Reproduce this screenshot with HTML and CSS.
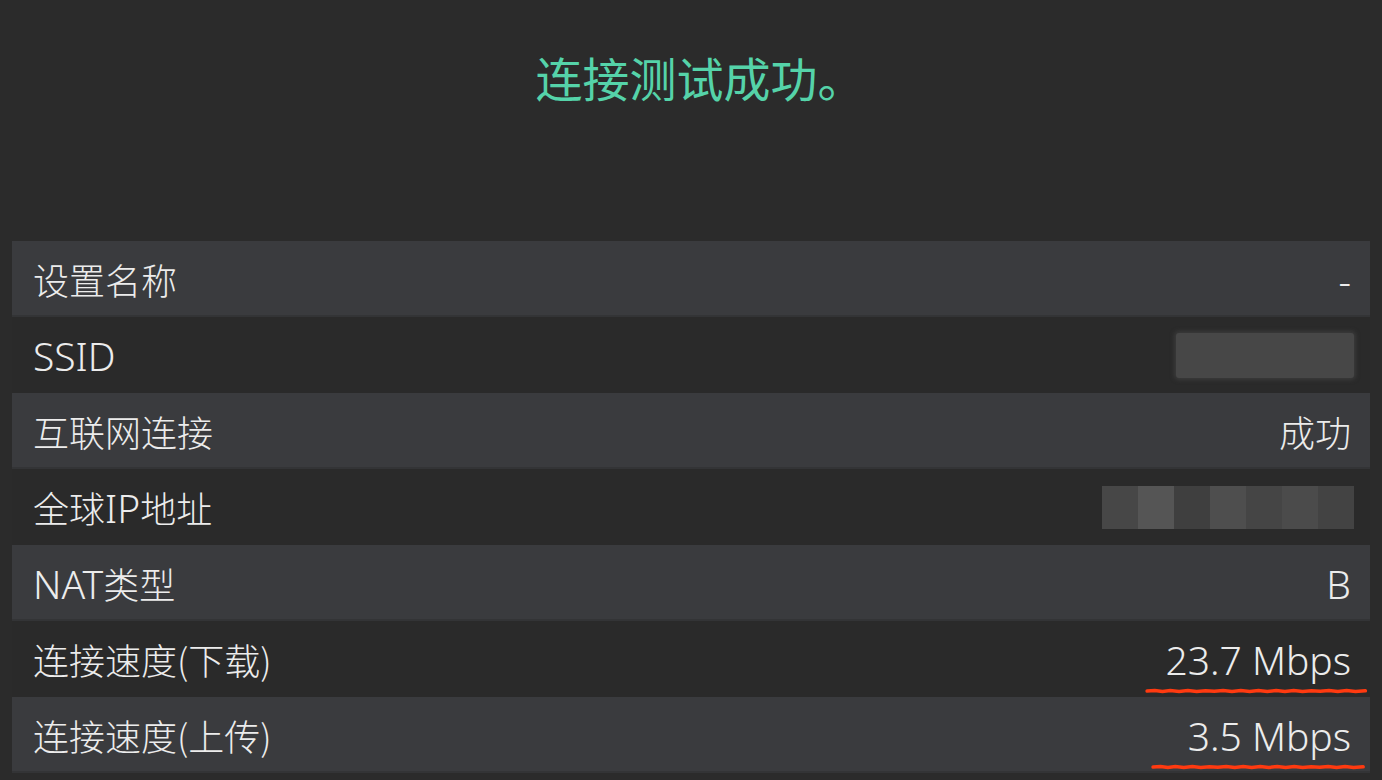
FILE: index.html
```html
<!DOCTYPE html>
<html lang="zh-CN">
<head>
<meta charset="utf-8">
<title>连接测试</title>
<link rel="stylesheet" href="styles.css">
</head>
<body>
<div class="screen">
  <header class="head">
    <h1 class="title">连接测试成功。</h1>
  </header>
  <ul class="list">
    <li class="row light"><span class="label">设置名称</span><span class="value"><span class="en">-</span></span></li>
    <li class="row"><span class="label"><span class="en">SSID</span></span><span class="value"><span class="blur-ssid"></span></span></li>
    <li class="row light"><span class="label">互联网连接</span><span class="value">成功</span></li>
    <li class="row"><span class="label">全球<span class="en">IP</span>地址</span><span class="value">
      <span class="mosaic">
        <i class="m1"></i><i class="m2"></i><i class="m3"></i><i class="m4"></i><i class="m5"></i><i class="m6"></i><i class="m7"></i>
      </span></span></li>
    <li class="row light"><span class="label"><span class="en">NAT</span>类型</span><span class="value"><span class="en">B</span></span></li>
    <li class="row"><span class="label">连接速度(下载)</span><span class="value marked m-down"><span class="en">23.7 Mbps</span>
      <svg class="redline" viewBox="0 0 200 6" preserveAspectRatio="none"><path d="M1 3 L8 2.4 L15 3.6 L22 2.6 L30 3.4 L38 2.5 L46 3.5 L54 2.7 L62 3.3 L70 2.4 L78 3.6 L86 2.6 L94 3.4 L102 2.5 L110 3.5 L118 2.6 L126 3.4 L134 2.5 L142 3.6 L150 2.7 L158 3.3 L166 2.4 L174 3.5 L182 2.6 L190 3.4 L199 2.8"/></svg></span></li>
    <li class="row light"><span class="label">连接速度(上传)</span><span class="value marked m-up"><span class="en">3.5 Mbps</span>
      <svg class="redline" viewBox="0 0 200 6" preserveAspectRatio="none"><path d="M1 3 L8 2.4 L15 3.6 L22 2.6 L30 3.4 L38 2.5 L46 3.5 L54 2.7 L62 3.3 L70 2.4 L78 3.6 L86 2.6 L94 3.4 L102 2.5 L110 3.5 L118 2.6 L126 3.4 L134 2.5 L142 3.6 L150 2.7 L158 3.3 L166 2.4 L174 3.5 L182 2.6 L190 3.4 L199 2.8"/></svg></span></li>
  </ul>
</div>
</body>
</html>
```

FILE: styles.css
```css
html, body {
  margin: 0;
  padding: 0;
  background: #2b2b2b;
}

.screen {
  width: 1382px;
  height: 780px;
  display: flex;
  flex-direction: column;
  font-family: "Noto Sans CJK SC", "Noto Sans", sans-serif;
  color: #ececec;
  overflow: hidden;
}

.head {
  height: 241px;
  display: flex;
  justify-content: center;
  box-sizing: border-box;
  padding-top: 47px;
}

.title {
  margin: 0;
  font-size: 47px;
  font-weight: 400;
  line-height: 60px;
  color: #55d3a9;
  padding-left: 18px;
}

.list {
  list-style: none;
  margin: 0;
  padding: 0 12px;
  display: flex;
  flex-direction: column;
}

.row {
  height: 76px;
  display: flex;
  align-items: center;
  justify-content: space-between;
  padding: 0 19px 0 21px;
  font-size: 36px;
  font-weight: 300;
  line-height: 1;
  background: #2a2a2a;
}

.row.light {
  background: #3a3b3e;
  box-shadow: inset 0 -2px 0 #333436;
}

.label {
  display: flex;
  align-items: baseline;
}

.value {
  position: relative;
  display: flex;
  align-items: baseline;
}

.en {
  font-family: "Noto Sans", "Noto Sans CJK SC", sans-serif;
  font-size: 39px;
  font-weight: 300;
}

.blur-ssid {
  display: block;
  width: 178px;
  height: 45px;
  margin-right: -3px;
  background: #474747;
  border-radius: 3px;
  box-shadow: 0 0 4px 2px rgba(70, 70, 70, 0.6);
}

.mosaic {
  display: flex;
  height: 43px;
  margin-right: -3px;
}

.mosaic i {
  display: block;
  width: 36px;
  height: 100%;
}

.mosaic .m1 { background: #474747; }
.mosaic .m2 { background: #555555; }
.mosaic .m3 { background: #3f3f3f; }
.mosaic .m4 { background: #4e4e4e; }
.mosaic .m5 { background: #454545; }
.mosaic .m6 { background: #4b4b4b; }
.mosaic .m7 { background: #434343; }

.redline {
  position: absolute;
  height: 6px;
  bottom: -15px;
  overflow: visible;
}

.redline path {
  fill: none;
  stroke: #ff3a10;
  stroke-width: 3.5;
  stroke-linecap: round;
  vector-effect: non-scaling-stroke;
}

.m-down .redline {
  left: -20px;
  width: calc(100% + 35px);
}

.m-up .redline {
  left: -36px;
  width: calc(100% + 49px);
}
```
